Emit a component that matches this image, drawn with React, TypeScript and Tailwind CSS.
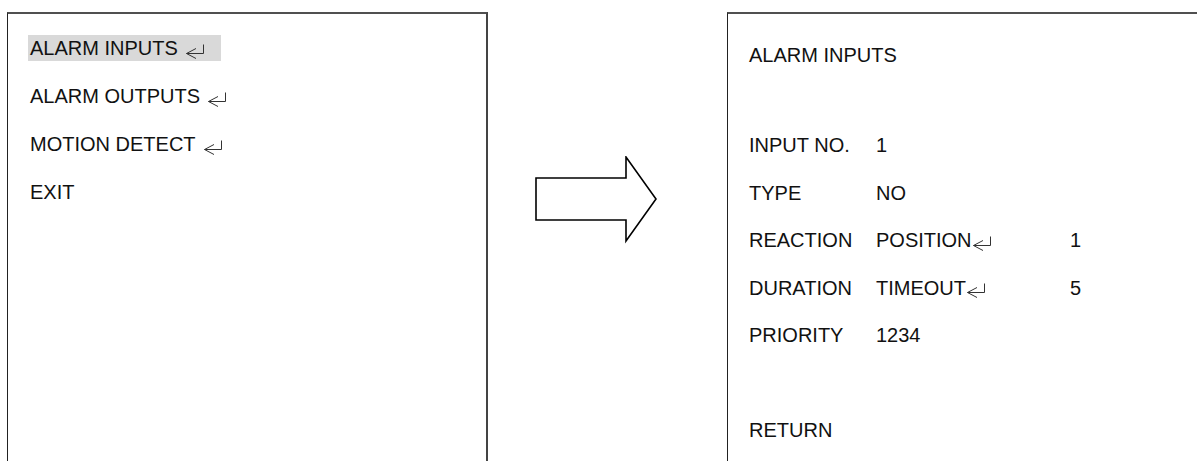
const EnterMark = () => (
  <svg width="20" height="15" viewBox="0 0 20 15" className="inline-block shrink-0 translate-y-[3px]" fill="none" stroke="#333" strokeWidth="1">
    <path d="M18.5 0.5 V9.5 H1.5" />
    <path d="M11 4.5 L1.5 9.5 L11 14.5" />
  </svg>
)

const menu = [
  { text: 'ALARM INPUTS', enter: true, active: true },
  { text: 'ALARM OUTPUTS', enter: true },
  { text: 'MOTION DETECT', enter: true },
  { text: 'EXIT', enter: false },
]

const rows: { label: string; value: string; enter?: boolean; extra?: string }[] = [
  { label: 'INPUT NO.', value: '1' },
  { label: 'TYPE', value: 'NO' },
  { label: 'REACTION', value: 'POSITION', enter: true, extra: '1' },
  { label: 'DURATION', value: 'TIMEOUT', enter: true, extra: '5' },
  { label: 'PRIORITY', value: '1234' },
]

export default function App() {
  return (
    <div className="w-[1197px] h-[461px] overflow-hidden bg-white flex items-start pt-3 pl-[7px] text-[20px] text-[#111] font-['Liberation_Sans',Arial,sans-serif]">
      {/* main menu */}
      <div className="w-[481px] h-[460px] shrink-0 border-t-2 border-t-[#505050] border-l border-l-[#222] border-r-2 border-r-[#444] pt-[21px] pl-[20px] flex flex-col gap-[22px]">
        {menu.map((m) => (
          <div key={m.text} className="h-[26px] flex">
            <div className={`flex items-center h-[26px] pl-[2px] pr-[16px] ${m.active ? 'bg-[#d9d9d9]' : ''}`}>
              <span>{m.text}</span>
              {m.enter && <span className="ml-[7px] flex"><EnterMark /></span>}
            </div>
          </div>
        ))}
      </div>

      {/* arrow */}
      <div className="w-[239px] shrink-0 pt-[144px] pl-[47px]">
        <svg width="124" height="88" viewBox="0 0 124 88" fill="none" stroke="#000" strokeWidth="1.6" strokeLinejoin="miter">
          <path d="M1 22 H91 V1 L121 43 L91 85 V64 H1 Z" />
        </svg>
      </div>

      {/* sub menu */}
      <div className="w-[480px] h-[460px] shrink-0 border-t-2 border-t-[#505050] border-l border-l-[#222] border-r-2 border-r-[#444] pt-[28px] pl-[21px]">
        <div className="h-[26px] leading-[26px]">ALARM INPUTS</div>
        <div className="mt-[64px] grid grid-cols-[127px_194px_auto] gap-y-[21.5px]">
          {rows.map((r) => (
            <div key={r.label} className="contents">
              <div className="h-[26px] leading-[26px]">{r.label}</div>
              <div className="h-[26px] leading-[26px] flex items-center">
                <span>{r.value}</span>
                {r.enter && <EnterMark />}
              </div>
              <div className="h-[26px] leading-[26px]">{r.extra ?? ''}</div>
            </div>
          ))}
        </div>
        <div className="mt-[69px] h-[26px] leading-[26px]">RETURN</div>
      </div>
    </div>
  )
}
